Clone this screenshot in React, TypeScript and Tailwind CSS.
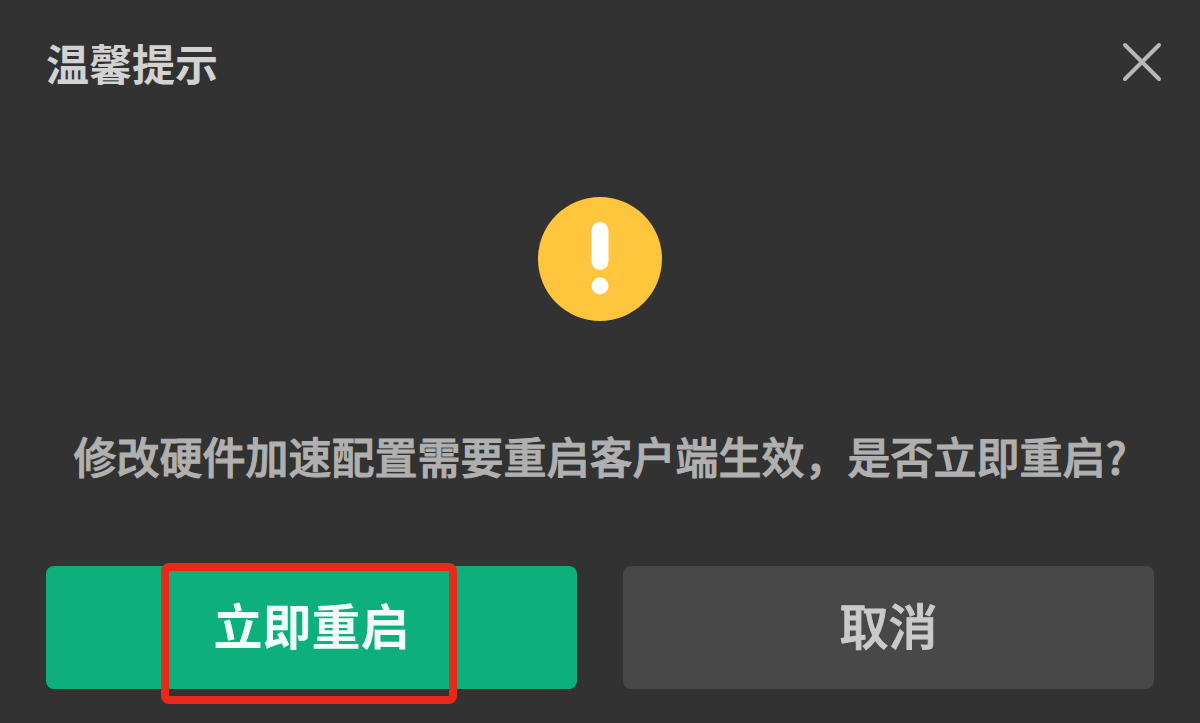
export default function App() {
  return (
    <main className="flex min-h-screen flex-col bg-[#323232] px-[46px] pb-[34px] font-['Noto_Sans_CJK_SC','Noto_Sans',sans-serif]">
      <header className="-mr-2 flex items-center justify-between pt-[30px]">
        <h1 className="text-[43px] leading-[64px] font-bold text-[#d2d2d2]">温馨提示</h1>
        <button type="button" aria-label="关闭" className="text-[#b8b8b8]">
          <svg className="size-10" viewBox="0 0 40 40" fill="none" stroke="currentColor" strokeWidth="4" strokeLinecap="round">
            <path d="M3 3 37 37M37 3 3 37" />
          </svg>
        </button>
      </header>
      <section className="flex flex-1 flex-col items-center pt-[103px]">
        <svg className="size-[124px]" viewBox="0 0 124 124" aria-hidden="true">
          <circle cx="62" cy="62" r="62" fill="#ffc53d" />
          <rect x="53.5" y="25" width="17" height="48" rx="8.5" fill="#fff" />
          <circle cx="62" cy="89" r="8.5" fill="#fff" />
        </svg>
        <p className="mt-[102px] text-center text-[43px] leading-[64px] font-medium whitespace-nowrap text-[#b0b0b0] [-webkit-text-stroke:1px_#b0b0b0]">
          修改硬件加速配置需要重启客户端生效，是否立即重启?
        </p>
      </section>
      <footer className="grid grid-cols-2 gap-[46px]">
        <button type="button" className="relative h-[123px] rounded-lg bg-[#0db07b] pb-2 text-[49px] font-bold text-[#f0fffa]">
          立即重启
          <span className="absolute -top-[3px] left-[115px] h-[141px] w-[296px] rounded-lg border-8 border-[#e8291c]" />
        </button>
        <button type="button" className="h-[123px] rounded-lg bg-[#484848] pb-2 text-[49px] font-medium text-[#cacaca] [-webkit-text-stroke:1px_#cacaca]">取消</button>
      </footer>
    </main>
  );
}
